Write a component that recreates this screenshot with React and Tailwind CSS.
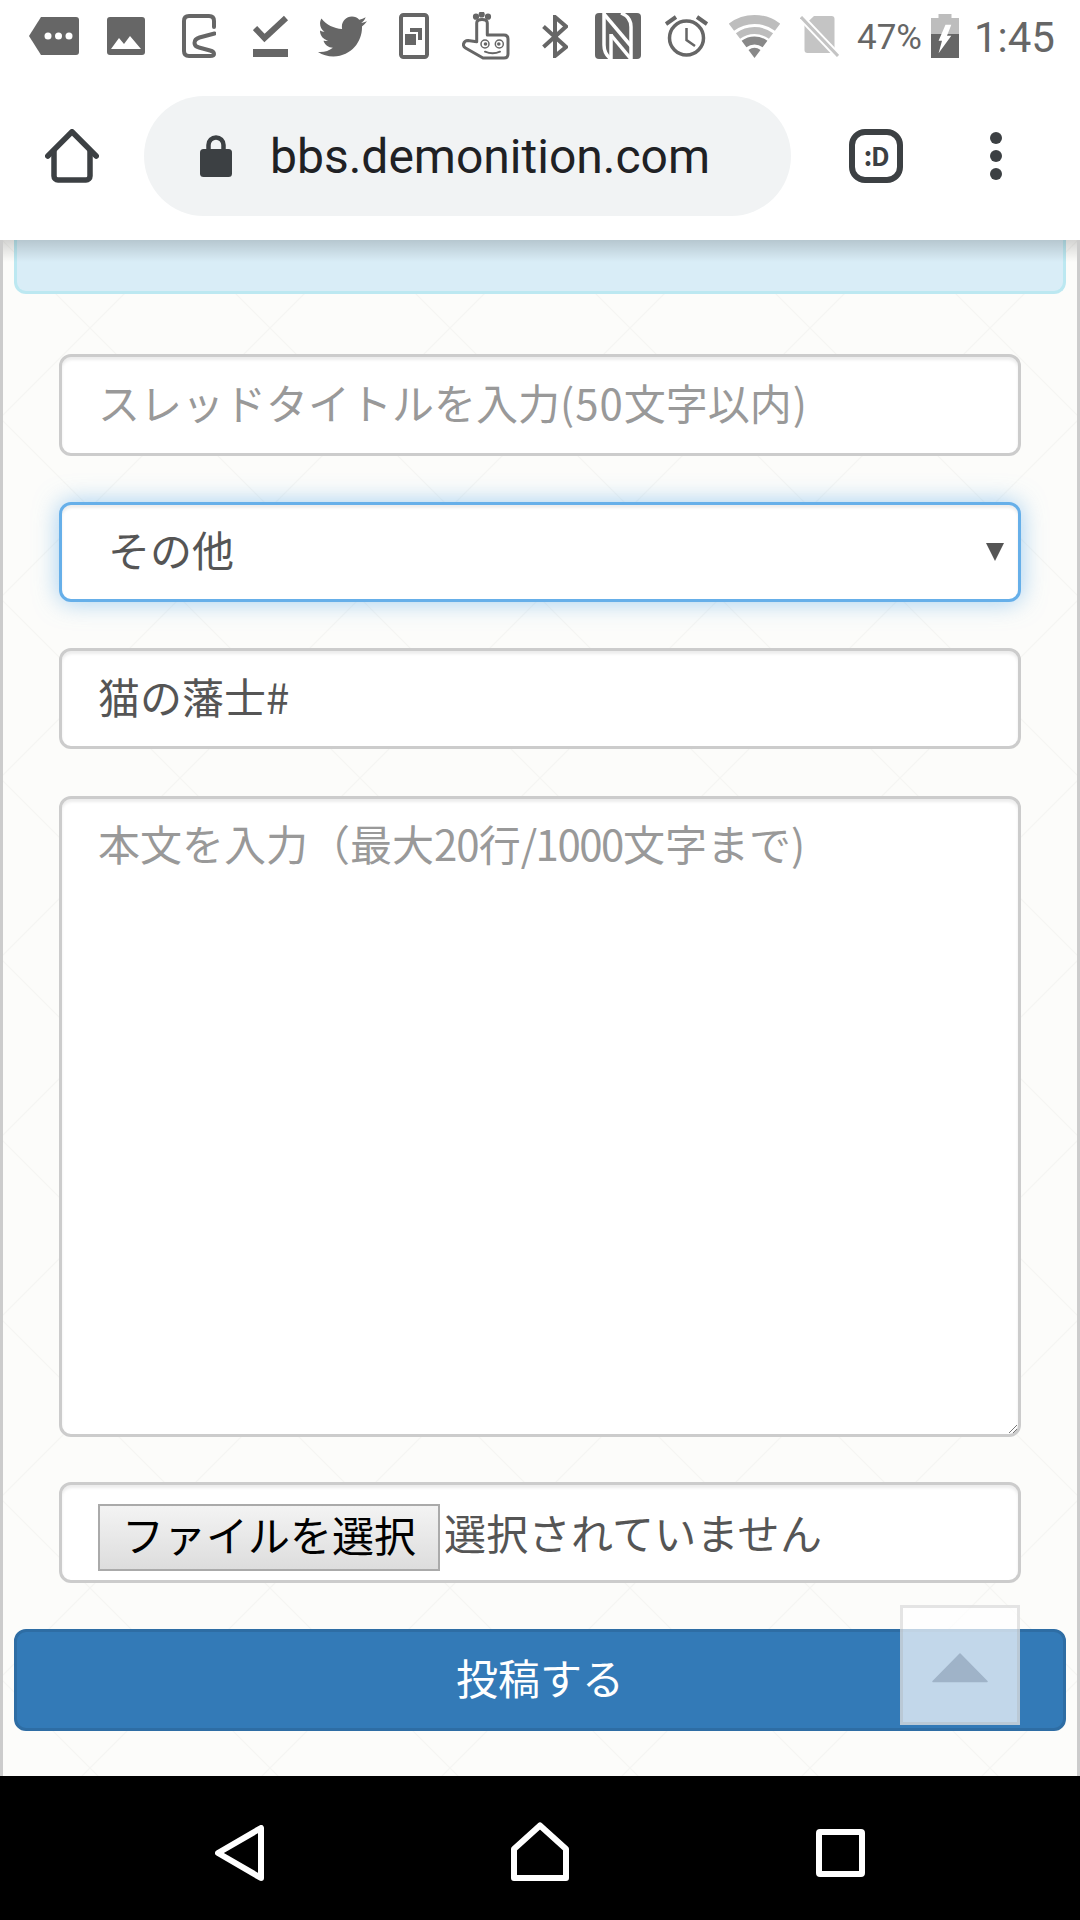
import React from "react";
import { FaTwitter } from "react-icons/fa";

const CJK = "font-['Noto_Sans_CJK_JP','Noto_Sans',sans-serif]";
const fieldBase =
  "bg-white border-[3px] border-[#cccccc] rounded-[12px] shadow-[inset_0_3px_3px_rgba(0,0,0,0.075)] text-[42px] leading-[60px] flex items-center pl-[36px]";

function StatusBar() {
  return (
    <div className="h-[72px] flex items-center pl-[29px] text-[#666666]">
      <svg width="50" height="38" viewBox="0 0 50 38" className="shrink-0">
        <path d="M12 0H47a3 3 0 0 1 3 3V35a3 3 0 0 1-3 3H12L0 19Z" fill="#666" />
        <circle cx="19" cy="19" r="3.5" fill="#fff" />
        <circle cx="29.5" cy="19" r="3.5" fill="#fff" />
        <circle cx="40" cy="19" r="3.5" fill="#fff" />
      </svg>
      <svg width="38" height="38" viewBox="0 0 38 38" className="shrink-0 ml-[28px]">
        <rect width="38" height="38" rx="3" fill="#666" />
        <path d="M4 32L12 21L17 27L23 19L34 32Z" fill="#fff" />
      </svg>
      <svg width="34" height="44" viewBox="0 0 34 44" className="shrink-0 ml-[37px]" fill="none" stroke="#666" strokeWidth="4" strokeLinecap="round">
        <path d="M32.5 19.5L17.5 23.5Q12.5 25 12.5 29Q12.5 32.5 17 33.5L28 36.5Q32 37.5 32 40Q32 42 28 42H7Q2 42 2 37V7Q2 2 7 2H27Q32 2 32 7V13" />
      </svg>
      <svg width="36" height="42" viewBox="0 0 36 42" className="shrink-0 ml-[37px]">
        <path d="M2 13L11.5 23L33 3" fill="none" stroke="#666" strokeWidth="6" />
        <rect x="0" y="34" width="35" height="8" fill="#666" />
      </svg>
      <FaTwitter className="shrink-0 ml-[29px] w-[49px] h-[49px] text-[#666666]" />
      <svg width="30" height="46" viewBox="0 0 30 46" className="shrink-0 ml-[32px]">
        <rect x="2" y="2" width="26" height="42" rx="2.5" fill="none" stroke="#666" strokeWidth="4" />
        <rect x="6" y="21" width="11" height="11" fill="#666" />
        <path d="M11 15H23V27H19V19H11Z" fill="#666" />
      </svg>
      <svg width="48" height="48" viewBox="0 0 48 48" className="shrink-0 ml-[33px]" fill="none" stroke="#666" strokeWidth="3" strokeLinejoin="round" strokeLinecap="round">
        <path d="M14.7 29.7V11Q14.7 7.5 20 7.5Q25.3 7.5 25.3 11V23H42Q46 23 46 27V42Q46 46 42 46H21L3.5 36Q1 34.5 1.5 32Q2.5 28.5 6 28.5Z" />
        <circle cx="14" cy="4.7" r="1.6" fill="#666" />
        <circle cx="19.7" cy="2.5" r="1.6" fill="#666" />
        <circle cx="26" cy="4.7" r="1.6" fill="#666" />
        <circle cx="23" cy="32" r="4" strokeWidth="1.5" />
        <circle cx="37.3" cy="32" r="4" strokeWidth="1.5" />
        <circle cx="23.5" cy="32" r="1.8" fill="#666" strokeWidth="0" />
        <circle cx="36.8" cy="32" r="1.8" fill="#666" strokeWidth="0" />
        <path d="M23 39.7Q30.7 43 38 39.7" strokeWidth="2" />
      </svg>
      <svg width="26" height="43" viewBox="0 0 26 43" className="shrink-0 ml-[32px]" fill="none" stroke="#666" strokeWidth="4">
        <path d="M1.5 11.5L24 32L13 41V2L24 11.5L1.5 32" />
      </svg>
      <svg width="46" height="46" viewBox="0 0 46 46" className="shrink-0 ml-[27px]">
        <rect width="46" height="46" rx="4" fill="#666" />
        <g fill="none" stroke="#fff" strokeWidth="3.5">
          <path d="M9 0V32Q9 41 16 46" />
          <path d="M9 1L36 33" />
          <path d="M16 46V21" />
          <path d="M36 46V14Q36 4 26 0" />
          <path d="M16 22L36 46" />
        </g>
      </svg>
      <svg width="43" height="42" viewBox="0 0 43 42" className="shrink-0 ml-[24px]" fill="none" stroke="#666" strokeWidth="3.5">
        <circle cx="21.5" cy="23" r="17" />
        <path d="M1 9L11 2M32 2L42 9" strokeWidth="4" />
        <path d="M21.5 13V25L30 31" strokeWidth="2.5" />
      </svg>
      <svg width="51" height="43" viewBox="0 0 51 43" className="shrink-0 ml-[21px]" fill="none">
        <path d="M2.4 12.2A38.5 38.5 0 0 1 48.6 12.2" stroke="#bdbdbd" strokeWidth="9" />
        <path d="M9 21A27.5 27.5 0 0 1 42 21" stroke="#bdbdbd" strokeWidth="7" />
        <path d="M15 29A17.5 17.5 0 0 1 36 29" stroke="#888" strokeWidth="8" />
        <path d="M25.5 43L19.5 35A10 10 0 0 1 31.5 35Z" fill="#888" />
      </svg>
      <svg width="39" height="41" viewBox="0 0 39 41" className="shrink-0 ml-[20px]">
        <path d="M14 0H31.5a3 3 0 0 1 3 3V37H7.5a3 3 0 0 1-3-3V9Z" fill="#c4c4c4" />
        <path d="M0 0L39 41" stroke="#fff" strokeWidth="7" />
        <path d="M1 1L38 40" stroke="#c4c4c4" strokeWidth="3" />
      </svg>
      <span className="ml-[18px] mt-[3px] text-[35px] font-['Roboto',sans-serif] leading-none shrink-0">47%</span>
      <svg width="28" height="44" viewBox="0 0 28 44" className="shrink-0 ml-[9px]">
        <rect x="7.5" y="0" width="13" height="5" fill="#bdbdbd" />
        <rect x="0" y="4" width="28" height="16" fill="#bdbdbd" />
        <rect x="0" y="20" width="28" height="24" fill="#666" />
        <path d="M14.5 10.7H20.3L16 21.7H20.3L7.6 39.3L11 26.7H7.6Z" fill="#fff" />
      </svg>
      <span className="ml-[15px] mt-[3px] text-[42px] font-['Roboto',sans-serif] leading-none shrink-0">1:45</span>
    </div>
  );
}

function Toolbar() {
  return (
    <div className="h-[168px] flex items-start pl-[45px]">
      <svg width="54" height="54" viewBox="0 0 54 54" className="shrink-0 mt-[57px]" fill="none" stroke="#3c4043" strokeWidth="5.5" strokeLinecap="round" strokeLinejoin="round">
        <path d="M2.8 27L27 2.8L51.2 27" />
        <path d="M9 22V47a4 4 0 0 0 4 4H41a4 4 0 0 0 4-4V22" />
      </svg>
      <div className="ml-[45px] mt-[24px] w-[647px] h-[120px] rounded-full bg-[#f1f3f4] flex items-center pl-[56px] shrink-0">
        <svg width="32" height="42" viewBox="0 0 32 42" className="shrink-0">
          <path d="M8.5 15V10a7.5 7.5 0 0 1 15 0V15" fill="none" stroke="#3c4043" strokeWidth="4.5" />
          <rect x="0" y="14" width="32" height="28" rx="3.5" fill="#3c4043" />
        </svg>
        <span className="ml-[38px] mt-[2px] text-[48px] leading-none text-[#202124] font-['Roboto',sans-serif]">bbs.demonition.com</span>
      </div>
      <div className="ml-[58px] mt-[57px] w-[54px] h-[54px] border-[6px] border-[#3c4043] rounded-[16px] flex items-center justify-center shrink-0 text-[#3c4043] text-[26px] leading-none font-bold tracking-tighter font-['Noto_Sans_CJK_JP',sans-serif] pb-[2px]">
        :D
      </div>
      <div className="ml-[87px] mt-[60px] flex flex-col gap-[6px] shrink-0">
        <div className="w-[12px] h-[12px] rounded-full bg-[#3c4043]" />
        <div className="w-[12px] h-[12px] rounded-full bg-[#3c4043]" />
        <div className="w-[12px] h-[12px] rounded-full bg-[#3c4043]" />
      </div>
    </div>
  );
}

function Form() {
  return (
    <div className="px-[45px]">
      <div className={`${fieldBase} mt-[60px] h-[102px] pb-[6px] text-[#999999]`}>
        <span>スレッドタイトルを入力<span className="tracking-[1px]">(50</span>文字以内<span className="pl-[1px]">)</span></span>
      </div>
      <div className="mt-[46px] h-[100px] bg-white border-[3px] border-[#66afe9] rounded-[12px] shadow-[inset_0_3px_3px_rgba(0,0,0,0.075),0_0_24px_rgba(102,175,233,0.6)] text-[42px] leading-[60px] text-[#555555] flex items-center justify-between pl-[46px] pr-[14px]">
        <span className="mb-[6px]">その他</span>
        <svg width="18" height="18" viewBox="0 0 18 18">
          <path d="M0 0H18L9 18Z" fill="#555" />
        </svg>
      </div>
      <div className={`${fieldBase} mt-[46px] h-[101px] pb-[6px] text-[#555555]`}>猫の藩士#</div>
      <div className="relative mt-[47px] h-[641px] bg-white border-[3px] border-[#cccccc] rounded-[12px] shadow-[inset_0_3px_3px_rgba(0,0,0,0.075)] text-[42px] leading-[60px] text-[#999999] pl-[36px] pt-[14px]">
        本文を入力（最大<span className="tracking-[-1px]">20</span>行<span className="tracking-[-1.5px]">/1000</span>文字まで)
        <svg width="10" height="10" viewBox="0 0 10 10" className="absolute right-[0px] bottom-[0px]" stroke="#777" strokeWidth="1">
          <path d="M1 9L9 1M5 9L9 5" />
        </svg>
      </div>
      <div className={`${fieldBase} mt-[45px] h-[101px] text-[#555555]`}>
        <button className="mt-[9px] h-[67px] w-[342px] border-2 border-[#aaaaaa] bg-[linear-gradient(#f3f3f3,#dddddd)] text-black text-[42px] leading-none flex items-center justify-center shrink-0 pb-[6px]">
          ファイルを選択
        </button>
        <span className="ml-[4px] mb-[2px] tracking-[0.3px]">選択されていません</span>
      </div>
    </div>
  );
}

export default function App() {
  return (
    <div className={`w-[1080px] h-[1920px] flex flex-col overflow-hidden bg-black ${CJK}`}>
      <header className="h-[240px] bg-white shrink-0 relative z-10">
        <StatusBar />
        <Toolbar />
      </header>
      <main className="relative flex-1 overflow-hidden border-x-[3px] border-[#cccccc] px-[11px] bg-[#fcfcfa] bg-[linear-gradient(45deg,transparent_calc(50%-1px),#f5f5f3_50%,transparent_calc(50%+1px)),linear-gradient(-45deg,transparent_calc(50%-1px),#f5f5f3_50%,transparent_calc(50%+1px))] bg-[size:180px_180px] bg-[position:-3px_-2px]">
        <div className="h-[54px] overflow-hidden bg-[#d9edf7] border-x-[3px] border-b-[3px] border-[#bce8f1] rounded-b-[12px] text-[#31708f] text-[42px] leading-[60px] pl-[40px] whitespace-nowrap">
          <div className="-mt-[53px]">ご利用の前に必ずルールをお読みください。</div>
        </div>
        <Form />
        <button className="mt-[46px] w-full h-[102px] bg-[#337ab7] border-[3px] border-[#2e6da4] rounded-[12px] text-white text-[42px] leading-none flex items-center justify-center pb-[6px]">
          投稿する
        </button>
        <div className="absolute inset-x-0 top-0 h-[22px] bg-[linear-gradient(rgba(0,0,0,0.16),rgba(0,0,0,0))]" />
        <div className="absolute left-[897px] top-[1365px] w-[120px] h-[120px] bg-white/70 border-[3px] border-[rgba(170,170,170,0.3)] flex items-center justify-center">
          <svg width="56" height="30" viewBox="0 0 56 30" className="mt-[5px]">
            <path d="M28 1L55 28.5H1Z" fill="#9fb3c8" stroke="#9fb3c8" strokeWidth="1.5" strokeLinejoin="round" />
          </svg>
        </div>
      </main>
      <nav className="h-[144px] bg-black shrink-0 flex items-center pl-[215px] pt-[10px] gap-[247px]">
        <svg width="49" height="56" viewBox="0 0 49 56" fill="none" stroke="#fff" strokeWidth="6" strokeLinejoin="round">
          <path d="M46 3V53L3 28Z" />
        </svg>
        <svg width="58" height="59" viewBox="0 0 58 59" fill="none" stroke="#fff" strokeWidth="6" strokeLinejoin="round" className="-mt-[3px]">
          <path d="M3 56V27L29 3.5L55 27V56Z" />
        </svg>
        <svg width="49" height="48" viewBox="0 0 49 48" fill="none" stroke="#fff" strokeWidth="6" strokeLinejoin="round">
          <rect x="3" y="3" width="43" height="42" rx="1" />
        </svg>
      </nav>
    </div>
  );
}
